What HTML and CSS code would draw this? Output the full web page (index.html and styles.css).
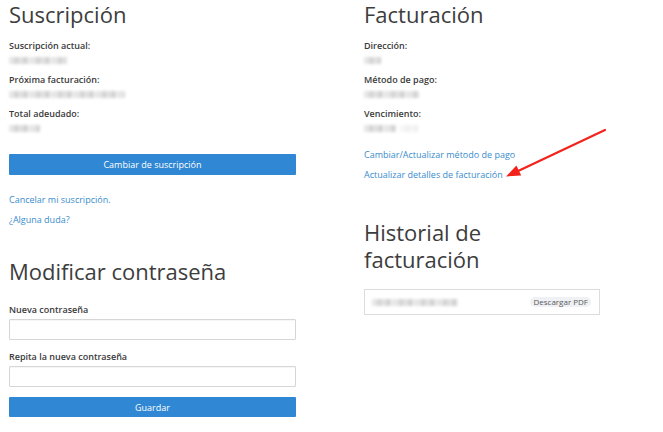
FILE: index.html
```html
<html>
<head>
    <title>Mi cuenta</title>
    <link rel="stylesheet" href="styles.css">
</head>
<body>
<div class="page">
    <div class="col col-left">
        <h2 class="title">Suscripción</h2>
        <dl class="info">
            <div class="field">
                <dt>Suscripción actual:</dt>
                <dd><span class="redacted r-sub"></span></dd>
            </div>
            <div class="field">
                <dt>Próxima facturación:</dt>
                <dd><span class="redacted r-next"></span></dd>
            </div>
            <div class="field">
                <dt>Total adeudado:</dt>
                <dd><span class="redacted r-total"></span></dd>
            </div>
        </dl>
        <button class="btn btn-sub">Cambiar de suscripción</button>
        <ul class="links links-left">
            <li><a href="#">Cancelar mi suscripción.</a></li>
            <li><a href="#">¿Alguna duda?</a></li>
        </ul>

        <h2 class="title title-pass">Modificar contraseña</h2>
        <form class="pass-form">
            <label for="new-pass">Nueva contraseña</label>
            <input id="new-pass" type="password">
            <label for="repeat-pass">Repita la nueva contraseña</label>
            <input id="repeat-pass" type="password">
            <button class="btn btn-save" type="button">Guardar</button>
        </form>
    </div>

    <div class="col col-right">
        <h2 class="title">Facturación</h2>
        <dl class="info">
            <div class="field">
                <dt>Dirección:</dt>
                <dd><span class="redacted r-addr"></span></dd>
            </div>
            <div class="field">
                <dt>Método de pago:</dt>
                <dd><span class="redacted r-method"></span></dd>
            </div>
            <div class="field">
                <dt>Vencimiento:</dt>
                <dd><span class="redacted r-due"></span><span class="redacted r-due-tail"></span></dd>
            </div>
        </dl>
        <ul class="links links-right">
            <li><a href="#">Cambiar/Actualizar método de pago</a></li>
            <li><a href="#">Actualizar detalles de facturación</a></li>
        </ul>

        <h2 class="title title-history">Historial de<br>facturación</h2>
        <div class="invoice">
            <span class="redacted r-invoice"></span>
            <a class="pdf" href="#">Descargar PDF</a>
        </div>
    </div>
</div>

<!-- annotation arrow drawn over the screenshot -->
<svg class="arrow" width="663" height="432" viewBox="0 0 663 432">
    <line x1="605" y1="130" x2="516" y2="172" stroke="#f3231b" stroke-width="2.2" stroke-linecap="round"/>
    <polygon points="506,176.5 516.4,165.6 521.2,175.4" fill="#f3231b"/>
</svg>
</body>
</html>
```

FILE: styles.css
```css
body {
  margin: 0;
  background: #fff;
  font-family: "Open Sans", "Liberation Sans", sans-serif;
  color: #333;
}

.page {
  display: flex;
  gap: 68px;
  padding: 1px 0 0 9px;
}

.col-left {
  width: 287px;
}

.col-right {
  width: 237px;
}

.title {
  margin: 0;
  font-size: 22px;
  line-height: 27px;
  font-weight: 400;
  color: #3d3d3d;
}

.info {
  margin: 11px 0 0;
  padding-bottom: 1px;
}

.field {
  margin-bottom: 6px;
}

.field dt {
  font-size: 9px;
  line-height: 14px;
  font-weight: 600;
  color: #3a3a3a;
}

.field dd {
  margin: 0;
  height: 14px;
  display: flex;
  align-items: center;
}

/* blurred-out personal data */
.redacted {
  display: inline-block;
  height: 7px;
  filter: blur(1.4px);
  background: repeating-linear-gradient(to right,
    #e6e6e6 0, #e6e6e6 5px,
    #d4d4d4 5px, #d4d4d4 9px,
    #e0e0e0 9px, #e0e0e0 15px,
    #cdcdcd 15px, #cdcdcd 18px,
    #e9e9e9 18px, #e9e9e9 22px);
}

.r-sub { width: 58px; }
.r-next { width: 116px; }
.r-total { width: 31px; }
.r-addr { width: 17px; }
.r-method { width: 55px; }
.r-due { width: 32px; }
.r-due-tail { width: 18px; margin-left: 4px; opacity: 0.35; }
.r-invoice { width: 86px; }

.btn {
  display: block;
  width: 100%;
  height: 21px;
  border: 0;
  border-radius: 1px;
  background: #3087d3;
  color: #fff;
  font-family: inherit;
  font-size: 9px;
  cursor: pointer;
}

.btn-sub {
  margin-top: 12px;
}

.links {
  list-style: none;
  margin: 0;
  padding: 0;
  font-size: 9px;
  line-height: 14px;
}

.links li + li {
  margin-top: 6px;
}

.links a {
  color: #3a8ccc;
  text-decoration: none;
}

.links-left {
  margin-top: 18px;
}

.links-right {
  margin-top: 6px;
}

.title-pass {
  margin-top: 31px;
}

.pass-form {
  margin: 18px 0 0;
}

.pass-form label {
  display: block;
  font-size: 9px;
  line-height: 14px;
  font-weight: 600;
  color: #3a3a3a;
  margin-bottom: 2px;
}

.pass-form input {
  display: block;
  box-sizing: border-box;
  width: 100%;
  height: 21px;
  margin: 0 0 10px;
  border: 1px solid #d6d6d6;
  border-radius: 1px;
  box-shadow: inset 0 1px 1px rgba(0, 0, 0, 0.04);
}

.btn-save {
  height: 20px;
}

.title-history {
  margin-top: 37px;
}

.invoice {
  box-sizing: border-box;
  width: 236px;
  height: 26px;
  margin-top: 16px;
  padding: 0 8px 0 7px;
  border: 1px solid #dcdcdc;
  display: flex;
  align-items: center;
  justify-content: space-between;
}

.pdf {
  font-size: 8px;
  line-height: 10px;
  padding: 0 3px;
  border-radius: 5px;
  background: #eff1f4;
  color: #5a5a5a;
  text-decoration: none;
}

.arrow {
  position: absolute;
  left: 0;
  top: 0;
  pointer-events: none;
}
```
